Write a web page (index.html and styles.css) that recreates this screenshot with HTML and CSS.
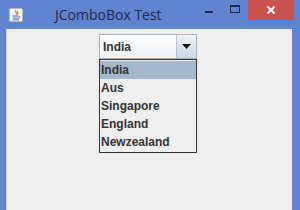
FILE: index.html
```html
<!DOCTYPE html>
<html lang="en">
<head>
<meta charset="UTF-8">
<meta name="viewport" content="width=device-width, initial-scale=1.0">
<title>JComboBox Test</title>
<link rel="stylesheet" href="styles.css">
</head>
<body>
<div class="window">
  <div class="titlebar">
    <div class="app-icon">
      <svg width="14" height="14" viewBox="0 0 14 14">
        <rect x="0.5" y="0.5" width="13" height="13" rx="1.5" fill="#f4f4f4" stroke="#b9b9b9"/>
        <path d="M7 2 C5 4 9 5 7 7 M8.5 3 C7.5 4.5 10 5 8.5 6.5" stroke="#e07b1e" stroke-width="1.2" fill="none"/>
        <path d="M3.5 8 H9.5 M4 10 H9 M3.5 11.8 H10" stroke="#4a6fa8" stroke-width="1"/>
        <path d="M9.5 8.3 C11.5 8.3 11.5 10.3 9.5 10.3" stroke="#4a6fa8" stroke-width="0.9" fill="none"/>
      </svg>
    </div>
    <div class="title">JComboBox Test</div>
    <div class="controls">
      <div class="btn min"><span></span></div>
      <div class="btn max"><span></span></div>
      <div class="btn close">
        <svg width="10" height="10" viewBox="0 0 10 10">
          <path d="M1.5 1.5 L8.5 8.5 M8.5 1.5 L1.5 8.5" stroke="#fff" stroke-width="1.8"/>
        </svg>
      </div>
    </div>
  </div>
  <div class="content">
    <div class="combo">
      <div class="combo-box">
        <div class="combo-value">India</div>
        <div class="combo-arrow">
          <svg width="9" height="5" viewBox="0 0 9 5"><path d="M0 0 H9 L4.5 5 Z" fill="#111"/></svg>
        </div>
      </div>
      <ul class="combo-list">
        <li class="selected">India</li>
        <li>Aus</li>
        <li>Singapore</li>
        <li>England</li>
        <li>Newzealand</li>
      </ul>
    </div>
  </div>
</div>
</body>
</html>
```
FILE: styles.css
```css
body {
  margin: 0;
  padding: 0;
  width: 300px;
  height: 210px;
  overflow: hidden;
  background-color: #6084d0;
  font-family: "Liberation Sans", Arial, sans-serif;
}

.window {
  width: 300px;
  height: 210px;
  display: flex;
  flex-direction: column;
  background-color: #6084d0;
}

.titlebar {
  height: 29px;
  display: flex;
  align-items: flex-start;
}

.app-icon {
  margin: 8px 0 0 9px;
  width: 14px;
  height: 14px;
}

.title {
  margin: 5px 0 0 32px;
  font-family: "Open Sans", "Noto Sans", sans-serif;
  font-size: 14px;
  color: #1d2a45;
}

.controls {
  margin-left: auto;
  margin-right: 6px;
  display: flex;
  height: 20px;
}

.btn {
  height: 20px;
  display: flex;
  align-items: center;
  justify-content: center;
}

.btn.min {
  width: 26px;
}

.btn.min span {
  display: block;
  width: 8px;
  height: 2px;
  margin-top: 4px;
  background-color: #1d2a45;
}

.btn.max {
  width: 26px;
}

.btn.max span {
  display: block;
  width: 8px;
  height: 5px;
  margin-top: -2px;
  border: 1px solid #1d2a45;
  border-top-width: 2px;
}

.btn.close {
  width: 46px;
  background-color: #c9524c;
}

.content {
  flex: 1;
  margin: 0 8px 0 6px;
  background-color: #eeeeee;
  border-left: 1px solid #cfd8ee;
  display: flex;
  justify-content: center;
}

.combo {
  margin-top: 5px;
  margin-right: 3px;
  width: 98px;
}

.combo-box {
  height: 23px;
  display: flex;
  border: 1px solid #a9b3bf;
  background: linear-gradient(#ffffff, #eef1f4);
}

.combo-value {
  flex: 1;
  font-size: 12px;
  font-weight: bold;
  color: #333333;
  padding: 5px 0 0 3px;
}

.combo-arrow {
  width: 19px;
  border-left: 1px solid #b7c3d0;
  background: linear-gradient(#eef3f8, #c9d7e6);
  display: flex;
  align-items: center;
  justify-content: center;
}

.combo-list {
  list-style: none;
  margin: 0;
  padding: 1px 0 1px 0;
  border: 1px solid #333333;
  background-color: #eeeeee;
}

.combo-list li {
  height: 18px;
  line-height: 18px;
  font-size: 12px;
  font-weight: bold;
  color: #333333;
  padding-left: 1px;
}

.combo-list li.selected {
  background-color: #a3b8cc;
}
```
